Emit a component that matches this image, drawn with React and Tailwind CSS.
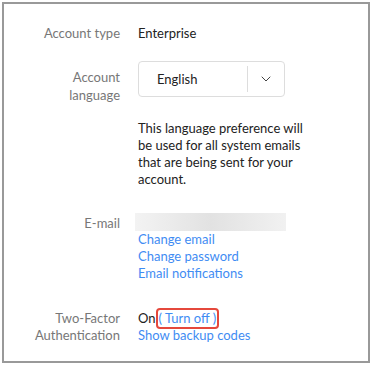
import { ChevronDown } from "lucide-react";

const Label = ({ children, className = "" }) => (
  <div className={`text-right text-[#777] ${className}`}>{children}</div>
);

const LinkText = ({ children }) => (
  <a href="#" className="block text-[#3f8cf3] leading-[17px]">{children}</a>
);

export default function App() {
  return (
    <div className="w-[372px] h-[365px] bg-white p-[2px] font-['Lato','Liberation_Sans',sans-serif] text-[13px]">
      <div className="h-[361px] w-[368px] border-2 border-[#999] bg-white">
        <div className="grid grid-cols-[116px_1fr] gap-x-[18px] pt-[20px] leading-[18px]">
          <Label>Account type</Label>
          <div className="text-[#222]">Enterprise</div>

          <Label className="mt-[19px] pt-[7px]">Account<br />language</Label>
          <div className="mt-[19px]">
            <div className="flex h-[36px] w-[147px] items-center rounded-[4px] border border-[#ddd] bg-white">
              <div className="flex-1 pl-[18px] text-[#222]">English</div>
              <div className="h-[26px] w-px bg-[#ddd]" />
              <div className="flex w-[36px] items-center justify-center">
                <ChevronDown size={16} strokeWidth={1.5} className="text-[#444]" />
              </div>
            </div>
            <p className="mt-[23px] w-[168px] text-[#222] leading-[17px]">
              This language preference will be used for all system emails that are being sent for your account.
            </p>
          </div>

          <Label className="mt-[25px] pt-[1px]">E-mail</Label>
          <div className="mt-[25px]">
            <div className="ml-[-3px] h-[18px] w-[151px] bg-gradient-to-r from-[#f3f3f3] via-[#e2e2e2] to-[#f1f1f1] blur-[0.5px]" />
            <div>
              <LinkText>Change email</LinkText>
              <LinkText>Change password</LinkText>
              <LinkText>Email notifications</LinkText>
            </div>
          </div>

          <Label className="mt-[28px] leading-[17px]">Two-Factor<br />Authentication</Label>
          <div className="mt-[28px] leading-[17px]">
            <div className="flex h-[17px] items-center">
              <span className="text-[#222]">On</span>
              <span className="flex h-[21px] items-center rounded-[4px] border-2 border-[#e5483c] px-[1px] text-[#3f8cf3]">( Turn off )</span>
            </div>
            <LinkText>Show backup codes</LinkText>
          </div>
        </div>
      </div>
    </div>
  );
}
